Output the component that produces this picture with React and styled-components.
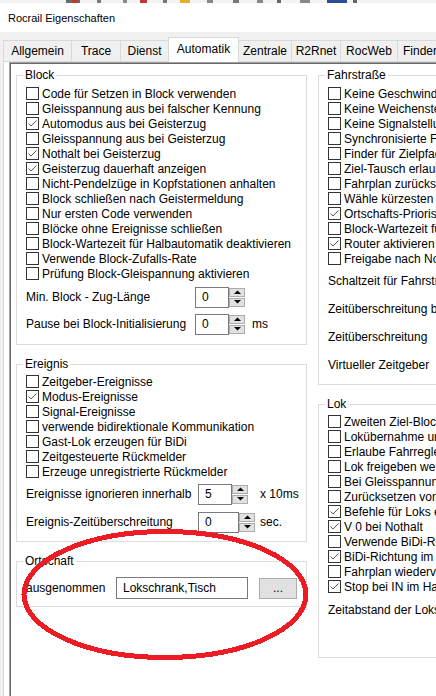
import React from 'react';
import styled, { createGlobalStyle } from 'styled-components';

const GlobalStyle = createGlobalStyle`
  html, body {
    margin: 0;
    padding: 0;
    background: #f0f0f0;
  }
  body {
    font-family: "Liberation Sans", Arial, sans-serif;
    font-size: 12px;
    color: #000;
  }
`;

const Window = styled.div`
  position: relative;
  width: 436px;
  height: 696px;
  overflow: hidden;
  display: flex;
  flex-direction: column;
  background: #f0f0f0;
`;

const IconStrip = styled.svg`
  display: block;
  flex: none;
`;

const TitleBar = styled.div`
  flex: none;
  height: 29px;
  display: flex;
  align-items: center;
  padding-left: 8px;
  background: #fff;
  font-size: 11px;
`;

const TabBar = styled.div`
  position: relative;
  z-index: 1;
  flex: none;
  height: 29px;
  display: flex;
  align-items: flex-end;
  padding-left: 3px;
`;

const Tab = styled.div`
  box-sizing: border-box;
  flex: none;
  width: ${({ $w }) => $w}px;
  height: ${({ $active }) => ($active ? 25 : 21)}px;
  margin-left: -1px;
  margin-bottom: ${({ $active }) => ($active ? -1 : 0)}px;
  padding-bottom: ${({ $active }) => ($active ? 3 : 0)}px;
  border: 1px solid #d9d9d9;
  border-bottom: none;
  background: ${({ $active }) => ($active ? '#fff' : '#f0f0f0')};
  display: flex;
  align-items: center;
  justify-content: center;
  white-space: nowrap;

  &:first-child {
    margin-left: 0;
  }
`;

const TabPage = styled.div`
  flex: 1;
  display: flex;
  min-height: 0;
  margin-left: 3px;
  padding-left: 5px;
  background: #fff;
  border-top: 1px solid #d9d9d9;
  border-left: 1px solid #d9d9d9;
`;

const ScrollArea = styled.div`
  flex: 1;
  padding: 5px 0 0 6px;
  border-top: 1px solid #a0a0a0;
  border-left: 1px solid #a0a0a0;
  box-shadow: inset 1px 1px 0 #696969;
`;

const Columns = styled.div`
  display: grid;
  grid-template-columns: 291px 330px;
  column-gap: 11px;
  align-items: start;
`;

const Column = styled.div`
  display: flex;
  flex-direction: column;
  gap: 12px;
`;

const Group = styled.fieldset`
  margin: 0;
  min-width: 0;
  display: flex;
  flex-direction: column;
  border: 1px solid #dcdcdc;
  padding: ${({ $pt }) => $pt}px 9px ${({ $pb }) => $pb}px 9px;
`;

const Legend = styled.legend`
  margin-left: -3px;
  padding: 0 2px;
  line-height: 15px;
`;

const CheckRow = styled.div`
  display: flex;
  align-items: center;
  height: 15px;
  white-space: nowrap;
`;

const Box = styled.span`
  box-sizing: border-box;
  flex: none;
  width: 13px;
  height: 13px;
  margin-right: 3px;
  border: 1px solid #333;
  background: #fff;
  display: flex;
`;

const FieldRow = styled.div`
  display: grid;
  grid-template-columns: ${({ $label }) => $label}px ${({ $field }) => $field}px auto;
  align-items: center;
  height: 22px;
  margin-top: ${({ $mt }) => $mt}px;
  white-space: nowrap;
`;

const LabelRow = styled.div`
  display: flex;
  align-items: center;
  height: 22px;
  margin-top: ${({ $mt }) => $mt}px;
  white-space: nowrap;
`;

const Spin = styled.div`
  display: flex;
  height: 21px;
`;

const SpinText = styled.div`
  box-sizing: border-box;
  width: ${({ $w }) => $w}px;
  padding-left: 6px;
  border: 1px solid #7a7a7a;
  display: flex;
  align-items: center;
`;

const SpinButtons = styled.div`
  box-sizing: border-box;
  width: 16px;
  padding: 1px 0;
  display: flex;
  flex-direction: column;
  gap: 1px;
`;

const SpinButton = styled.div`
  flex: 1;
  border: 1px solid #acacac;
  background: #e1e1e1;
  display: flex;
  align-items: center;
  justify-content: center;
`;

const OrtRow = styled.div`
  display: grid;
  grid-template-columns: 79px 132px 38px;
  column-gap: 11px;
  align-items: center;
  height: 22px;
  white-space: nowrap;
`;

const TextInput = styled.div`
  box-sizing: border-box;
  height: 22px;
  padding-left: 6px;
  border: 1px solid #7a7a7a;
  display: flex;
  align-items: center;
`;

const DotsButton = styled.div`
  box-sizing: border-box;
  height: 21px;
  border: 1px solid #adadad;
  background: #e1e1e1;
  display: flex;
  align-items: center;
  justify-content: center;
`;

const Marker = styled.svg`
  position: absolute;
  top: 0;
  left: 0;
  pointer-events: none;
`;

const tabs = [
  { label: 'Allgemein', w: 69 },
  { label: 'Trace', w: 50 },
  { label: 'Dienst', w: 49 },
  { label: 'Automatik', w: 71, active: true },
  { label: 'Zentrale', w: 54 },
  { label: 'R2Rnet', w: 50 },
  { label: 'RocWeb', w: 58 },
  { label: 'Finder', w: 46 },
];

const blockItems = [
  ['Code für Setzen in Block verwenden', false],
  ['Gleisspannung aus bei falscher Kennung', false],
  ['Automodus aus bei Geisterzug', true],
  ['Gleisspannung aus bei Geisterzug', false],
  ['Nothalt bei Geisterzug', true],
  ['Geisterzug dauerhaft anzeigen', true],
  ['Nicht-Pendelzüge in Kopfstationen anhalten', false],
  ['Block schließen nach Geistermeldung', false],
  ['Nur ersten Code verwenden', false],
  ['Blöcke ohne Ereignisse schließen', false],
  ['Block-Wartezeit für Halbautomatik deaktivieren', false],
  ['Verwende Block-Zufalls-Rate', false],
  ['Prüfung Block-Gleispannung aktivieren', false],
];

const eventItems = [
  ['Zeitgeber-Ereignisse', false],
  ['Modus-Ereignisse', true],
  ['Signal-Ereignisse', false],
  ['verwende bidirektionale Kommunikation', false],
  ['Gast-Lok erzeugen für BiDi', false],
  ['Zeitgesteuerte Rückmelder', false],
  ['Erzeuge unregistrierte Rückmelder', false],
];

const routeItems = [
  ['Keine Geschwindigkeitsänderung', false],
  ['Keine Weichenstellung', false],
  ['Keine Signalstellung', false],
  ['Synchronisierte Fahrstraßen', false],
  ['Finder für Zielpfade', false],
  ['Ziel-Tausch erlauben', false],
  ['Fahrplan zurücksetzen', false],
  ['Wähle kürzesten Block', false],
  ['Ortschafts-Priorisierung', true],
  ['Block-Wartezeit für Fahrstraßen', false],
  ['Router aktivieren', true],
  ['Freigabe nach Nothalt', false],
];

const routeFields = [
  'Schaltzeit für Fahrstraßen',
  'Zeitüberschreitung bei Fahrstraßen',
  'Zeitüberschreitung',
  'Virtueller Zeitgeber',
];

const locoItems = [
  ['Zweiten Ziel-Block reservieren', false],
  ['Lokübernahme und Freigabe', false],
  ['Erlaube Fahrregler-Übernahme', false],
  ['Lok freigeben wenn angehalten', false],
  ['Bei Gleisspannung aus anhalten', false],
  ['Zurücksetzen von Loks', false],
  ['Befehle für Loks erlauben', true],
  ['V 0 bei Nothalt', true],
  ['Verwende BiDi-Richtung', false],
  ['BiDi-Richtung im Block', true],
  ['Fahrplan wiedervorlegen', false],
  ['Stop bei IN im Halteblock', true],
];

function CheckMark() {
  return (
    <svg width="11" height="11" viewBox="0 0 11 11">
      <path d="M1.5 5.5 L4 8 L9.5 2.5" fill="none" stroke="#5a5a5a" strokeWidth="1" />
    </svg>
  );
}

function Check({ label, checked }) {
  return (
    <CheckRow>
      <Box>{checked && <CheckMark />}</Box>
      {label}
    </CheckRow>
  );
}

function SpinBox({ value, w }) {
  return (
    <Spin>
      <SpinText $w={w}>{value}</SpinText>
      <SpinButtons>
        <SpinButton>
          <svg width="7" height="4" viewBox="0 0 7 4">
            <path d="M0 4 L3.5 0.5 L7 4 Z" fill="#000" />
          </svg>
        </SpinButton>
        <SpinButton>
          <svg width="7" height="4" viewBox="0 0 7 4">
            <path d="M0 0 L3.5 3.5 L7 0 Z" fill="#000" />
          </svg>
        </SpinButton>
      </SpinButtons>
    </Spin>
  );
}

function TopIcons() {
  const bits = [
    [66, 14, '#6a6a6a'], [72, 6, '#c0392b'], [97, 4, '#7a7a7a'], [123, 4, '#888'],
    [140, 7, '#c0392b'], [163, 4, '#777'], [180, 10, '#e0b030'], [207, 6, '#888'],
    [233, 6, '#777'], [257, 6, '#888'], [277, 4, '#666'], [300, 10, '#888'],
    [327, 20, '#2c4f9a'], [353, 4, '#666'],
  ];
  return (
    <IconStrip width="436" height="3">
      <rect width="436" height="3" fill="#f3f3f3" />
      {bits.map(([x, w, c], i) => (
        <rect key={i} x={x} y="0" width={w} height="3" fill={c} />
      ))}
    </IconStrip>
  );
}

export default function App() {
  return (
    <Window>
      <GlobalStyle />
      <TopIcons />
      <TitleBar>Rocrail Eigenschaften</TitleBar>
      <TabBar>
        {tabs.map((t) => (
          <Tab key={t.label} $w={t.w} $active={t.active}>
            {t.label}
          </Tab>
        ))}
      </TabBar>
      <TabPage>
        <ScrollArea>
          <Columns>
            <Column>
              <Group $pt={3} $pb={9}>
                <Legend>Block</Legend>
                {blockItems.map(([l, c]) => (
                  <Check key={l} label={l} checked={c} />
                ))}
                <FieldRow $label={169} $field={57} $mt={5}>
                  <span>Min. Block - Zug-Länge</span>
                  <SpinBox value="0" w={34} />
                  <span />
                </FieldRow>
                <FieldRow $label={169} $field={57} $mt={5}>
                  <span>Pause bei Block-Initialisierung</span>
                  <SpinBox value="0" w={34} />
                  <span>ms</span>
                </FieldRow>
              </Group>

              <Group $pt={2} $pb={8}>
                <Legend>Ereignis</Legend>
                {eventItems.map(([l, c]) => (
                  <Check key={l} label={l} checked={c} />
                ))}
                <FieldRow $label={172} $field={62} $mt={4}>
                  <span>Ereignisse ignorieren innerhalb</span>
                  <SpinBox value="5" w={34} />
                  <span>x 10ms</span>
                </FieldRow>
                <FieldRow $label={172} $field={62} $mt={6}>
                  <span>Ereignis-Zeitüberschreitung</span>
                  <SpinBox value="0" w={41} />
                  <span>sec.</span>
                </FieldRow>
              </Group>

              <Group $pt={8} $pb={7}>
                <Legend>Ortschaft</Legend>
                <OrtRow>
                  <span>ausgenommen</span>
                  <TextInput>Lokschrank,Tisch</TextInput>
                  <DotsButton>...</DotsButton>
                </OrtRow>
              </Group>
            </Column>

            <Column>
              <Group $pt={3} $pb={8}>
                <Legend>Fahrstraße</Legend>
                {routeItems.map(([l, c]) => (
                  <Check key={l} label={l} checked={c} />
                ))}
                {routeFields.map((l, i) => (
                  <LabelRow key={l} $mt={i === 0 ? 4 : 6}>
                    {l}
                  </LabelRow>
                ))}
              </Group>

              <Group $pt={2} $pb={36}>
                <Legend>Lok</Legend>
                {locoItems.map(([l, c]) => (
                  <Check key={l} label={l} checked={c} />
                ))}
                <LabelRow $mt={5}>Zeitabstand der Loks im Block</LabelRow>
              </Group>
            </Column>
          </Columns>
        </ScrollArea>
      </TabPage>

      <Marker width="436" height="696">
        <ellipse
          cx="165"
          cy="594.5"
          rx="141"
          ry="63"
          fill="none"
          stroke="#ed1c24"
          strokeWidth="5"
          shapeRendering="crispEdges"
        />
      </Marker>
    </Window>
  );
}
